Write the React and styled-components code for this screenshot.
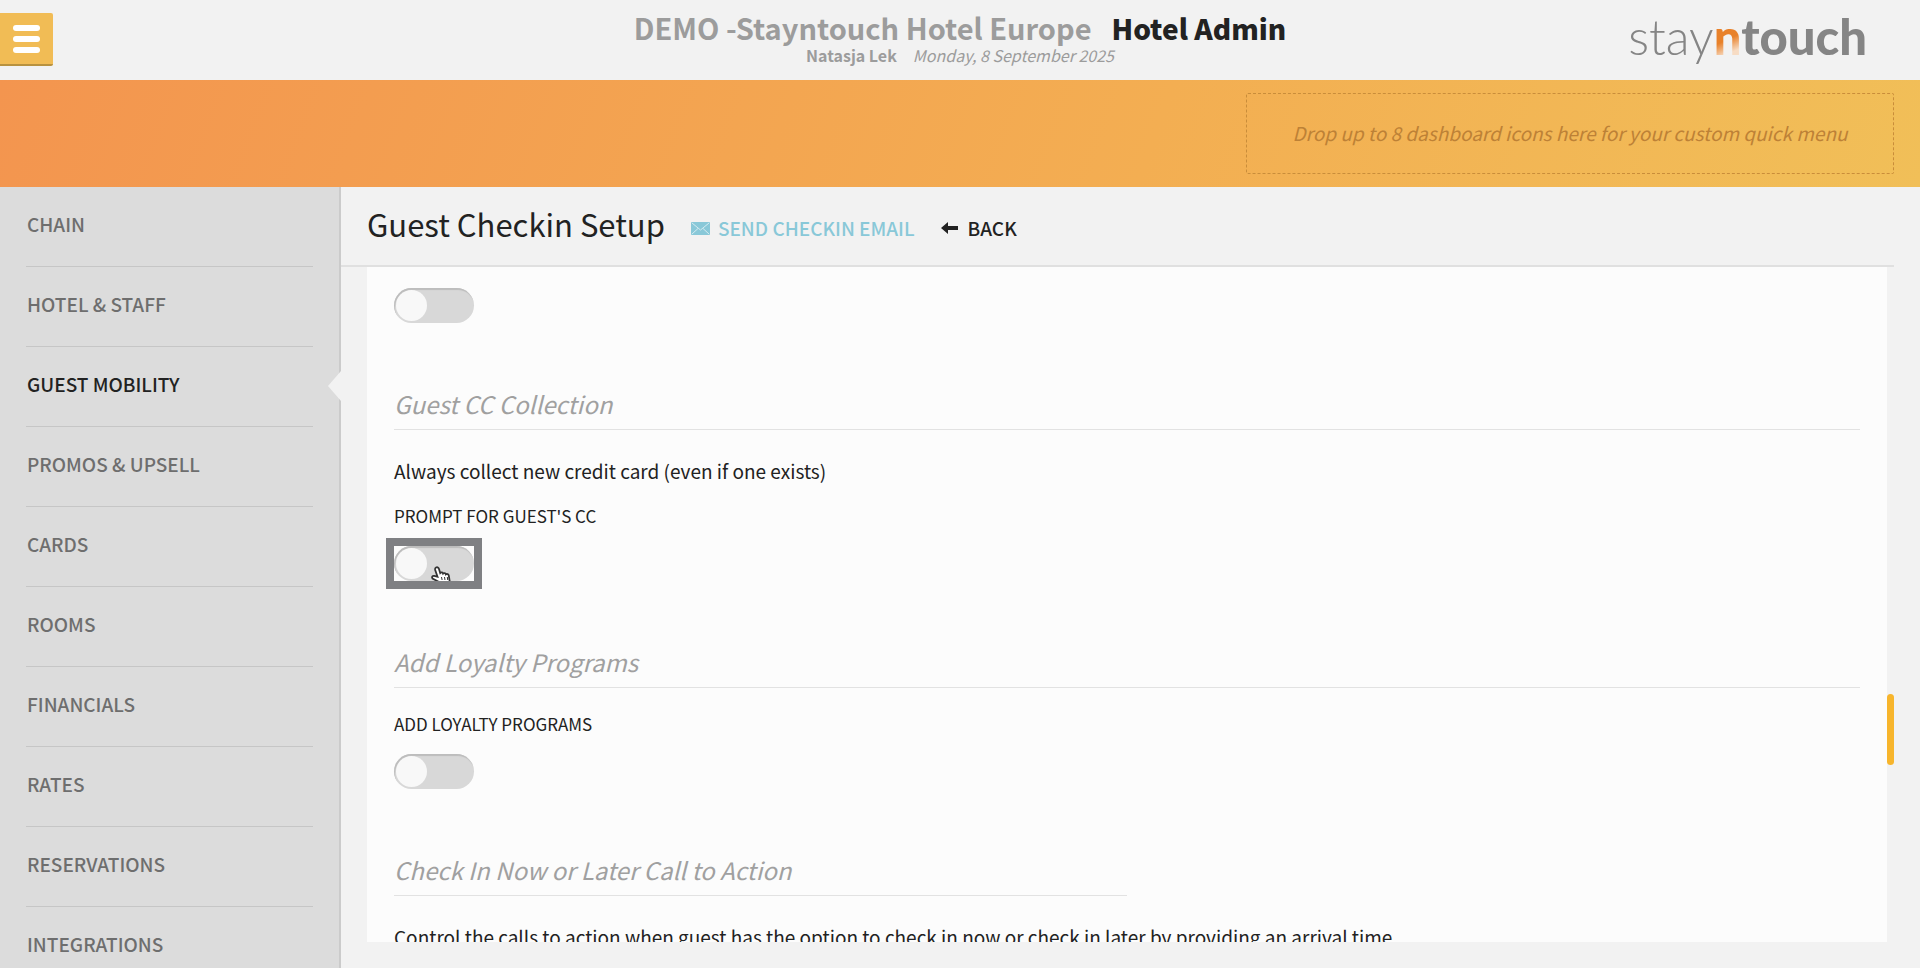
import React from "react";
import styled, { createGlobalStyle } from "styled-components";

const GlobalStyle = createGlobalStyle`
  * {
    box-sizing: border-box;
  }

  body {
    margin: 0;
    background: #f2f2f2;
    color: #222;
    font-family: "Noto Sans CJK SC", "Noto Sans", sans-serif;
    font-size: 19px;
  }
`;

const Page = styled.div`
  display: flex;
  flex-direction: column;
  height: 100vh;
  overflow: hidden;
`;

const TopBar = styled.header`
  display: grid;
  grid-template-columns: 1fr auto 1fr;
  height: 80px;
  flex: none;
`;

const MenuButton = styled.button`
  display: flex;
  flex-direction: column;
  align-items: center;
  justify-content: center;
  gap: 5px;
  width: 53px;
  height: 53px;
  margin-top: 13px;
  padding: 0;
  border: 0;
  border-bottom: 2px solid #b8923f;
  border-radius: 0 2px 2px 0;
  background: #f1bc55;

  span {
    width: 27px;
    height: 6px;
    border-radius: 3px;
    background: #fff;
  }
`;

const Titles = styled.div`
  padding-top: 9px;
  text-align: center;
`;

const HotelTitle = styled.h1`
  margin: 0;
  font-size: 29px;
  font-weight: 700;
  line-height: 36px;
  white-space: nowrap;
  color: #9c9c9c;

  strong {
    margin-left: 20px;
    font-size: 28px;
    color: #222;
  }
`;

const UserLine = styled.p`
  margin: 0;
  font-size: 16px;
  line-height: 18px;
  color: #9c9c9c;

  em {
    margin-left: 16px;
  }
`;

const Logo = styled.a`
  justify-self: end;
  margin-right: 53px;
  font-family: Lato, sans-serif;
  font-size: 49px;
  font-weight: 300;
  line-height: 72px;
  color: #858585;
  text-decoration: none;

  b {
    font-weight: 900;
  }

  i {
    font-style: normal;
    font-weight: 900;
    color: transparent;
    background: linear-gradient(155deg, #e8812a 55%, #f7dcc4 76%);
    background-clip: text;
  }
`;

const QuickMenu = styled.div`
  display: flex;
  justify-content: flex-end;
  height: 107px;
  flex: none;
  padding: 13px 26px;
  background: linear-gradient(110deg, #f3954f, #f3ae52 60%, #f1bf58);
`;

const DropZone = styled.div`
  display: flex;
  align-items: center;
  justify-content: center;
  width: 648px;
  padding-bottom: 2px;
  border: 1px dashed #c98d3a;
  border-radius: 2px;
  font-style: italic;
  color: #bd8136;
`;

const Body = styled.div`
  display: flex;
  flex: 1;
  min-height: 0;
`;

const Sidebar = styled.nav`
  width: 341px;
  flex: none;
  padding: 0 26px;
  overflow: hidden;
  background: #dcdcdc;
  border-right: 2px solid #cbcbcb;
`;

const NavLink = styled.a`
  display: block;
  height: 80px;
  padding: 21px 1px 0;
  border-bottom: 1px solid #c6c6c6;
  font-weight: 500;
  line-height: 32px;
  color: ${(props) => (props.$active ? "#222" : "#6e6e6e")};
  text-decoration: none;
`;

const Content = styled.main`
  position: relative;
  display: flex;
  flex: 1;
  flex-direction: column;
  min-width: 0;
  padding-bottom: 26px;
`;

/* points from the page to the active menu entry */
const Pointer = styled.span`
  position: absolute;
  top: 184px;
  left: -13px;
  border: solid transparent;
  border-width: 15px 13px 15px 0;
  border-right-color: #f2f2f2;
`;

const PageHead = styled.div`
  display: flex;
  align-items: center;
  gap: 26px;
  height: 80px;
  flex: none;
  margin-right: 26px;
  padding-left: 26px;
  border-bottom: 2px solid #e0e0e0;

  h2 {
    margin: 0;
    padding-bottom: 4px;
    font-size: 31px;
    font-weight: 400;
    line-height: 40px;
  }
`;

const HeadLink = styled.a`
  display: flex;
  align-items: center;
  gap: ${(props) => props.$gap || 8}px;
  padding-top: 4px;
  font-weight: 500;
  line-height: 32px;
  color: ${(props) => props.$color};
  text-decoration: none;
`;

const PanelRow = styled.div`
  display: flex;
  flex: 1;
  min-height: 0;
  padding: 0 26px;
`;

const Panel = styled.div`
  flex: 1;
  padding: 21px 27px 0;
  overflow: hidden;
  background: #fcfcfc;
`;

const ScrollThumb = styled.div`
  width: 7px;
  height: 71px;
  margin-top: 427px;
  border-radius: 4px;
  background: #f7b52c;
`;

const Section = styled.section`
  width: ${(props) => (props.$half ? "50%" : "auto")};
  padding-top: 62px;
  white-space: nowrap;

  h3 {
    margin: 0 0 24px;
    padding-bottom: 6px;
    border-bottom: 1px solid #e2e2e2;
    font-size: 24px;
    font-style: italic;
    font-weight: 400;
    line-height: 38px;
    color: #a0a0a0;
  }

  p {
    margin: 26px 0 18px;
    line-height: 30px;
  }
`;

const Field = styled.label`
  display: grid;
  justify-items: start;
  gap: 18px;
  font-size: 17px;
  line-height: 24px;
  text-transform: uppercase;
`;

const Switch = styled.input`
  appearance: none;
  width: 80px;
  height: 35px;
  margin: 0;
  padding: 2px;
  border-radius: 18px;
  background: #d8d8d8;
  box-shadow: inset 1px 2px 1px #bdbdbd;

  &::before {
    content: "";
    display: block;
    width: 31px;
    height: 31px;
    border-radius: 50%;
    background: #f8f8f8;
  }

  &:checked::before {
    margin-left: auto;
  }
`;

const Highlight = styled.span`
  position: relative;
  display: flex;
  overflow: hidden;
  outline: 8px solid #7f8083;
`;

const Cursor = styled.svg`
  position: absolute;
  top: 20px;
  left: 36px;
`;

const menu = [
  "Chain",
  "Hotel & Staff",
  "Guest Mobility",
  "Promos & Upsell",
  "Cards",
  "Rooms",
  "Financials",
  "Rates",
  "Reservations",
  "Integrations",
];

function MailIcon() {
  return (
    <svg width="19" height="13" viewBox="0 0 19 13" aria-hidden="true">
      <rect width="19" height="13" rx="1" fill="#89c8d8" />
      <path
        d="M1 1l8.500 7L18 1M1 12l6-5.500M18 12l-6-5.500"
        fill="none"
        stroke="#d3ebf1"
      />
    </svg>
  );
}

function ArrowIcon() {
  return (
    <svg width="17" height="12" viewBox="0 0 17 12" aria-hidden="true">
      <path d="M0 6L7 0v4h10v4H7v4z" fill="#222" />
    </svg>
  );
}

function HandCursor() {
  return (
    <Cursor width="22" height="18" viewBox="0 0 22 18" aria-hidden="true">
      <path
        d="M6 1.500c1.500-.7 2.500 0 3 1.500l1.200 4c1-1 2.600-.7 2.900.6 1-.9 2.500-.5 2.800.8 1-.8 2.600-.2 2.900 1.200l1 6.400H9L2.500 12.500c-1-1.500 0-3 1.700-2.600l3.300.8L5.200 4C5 3 5 2 6 1.500z"
        fill="#fff"
        stroke="#333"
        strokeWidth="1.800"
      />
      <path d="M11.500 11l.6 3M14.500 11l.5 3M17.300 11l.4 3" stroke="#333" />
    </Cursor>
  );
}

export default function App() {
  return (
    <Page>
      <GlobalStyle />
      <TopBar>
        <MenuButton aria-label="Menu">
          <span />
          <span />
          <span />
        </MenuButton>
        <Titles>
          <HotelTitle>
            DEMO -Stayntouch Hotel Europe<strong>Hotel Admin</strong>
          </HotelTitle>
          <UserLine>
            <b>Natasja Lek</b>
            <em>Monday, 8 September 2025</em>
          </UserLine>
        </Titles>
        <Logo href="#">
          stay<i>n</i>
          <b>touch</b>
        </Logo>
      </TopBar>
      <QuickMenu>
        <DropZone>
          Drop up to 8 dashboard icons here for your custom quick menu
        </DropZone>
      </QuickMenu>
      <Body>
        <Sidebar>
          {menu.map((name) => (
            <NavLink key={name} href="#" $active={name === "Guest Mobility"}>
              {name.toUpperCase()}
            </NavLink>
          ))}
        </Sidebar>
        <Content>
          <Pointer />
          <PageHead>
            <h2>Guest Checkin Setup</h2>
            <HeadLink href="#" $color="#89c8d8">
              <MailIcon />
              SEND CHECKIN EMAIL
            </HeadLink>
            <HeadLink href="#" $color="#222" $gap={10}>
              <ArrowIcon />
              BACK
            </HeadLink>
          </PageHead>
          <PanelRow>
            <Panel>
              <Field>
                <Switch type="checkbox" aria-label="Enabled" />
              </Field>
              <Section>
                <h3>Guest CC Collection</h3>
                <p>Always collect new credit card (even if one exists)</p>
                <Field>
                  Prompt for guest's CC
                  <Highlight>
                    <Switch type="checkbox" />
                    <HandCursor />
                  </Highlight>
                </Field>
              </Section>
              <Section>
                <h3>Add Loyalty Programs</h3>
                <Field>
                  Add Loyalty Programs
                  <Switch type="checkbox" />
                </Field>
              </Section>
              <Section $half>
                <h3>Check In Now or Later Call to Action</h3>
                <p>
                  Control the calls to action when guest has the option to check
                  in now or check in later by providing an arrival time
                </p>
              </Section>
            </Panel>
            <ScrollThumb />
          </PanelRow>
        </Content>
      </Body>
    </Page>
  );
}
